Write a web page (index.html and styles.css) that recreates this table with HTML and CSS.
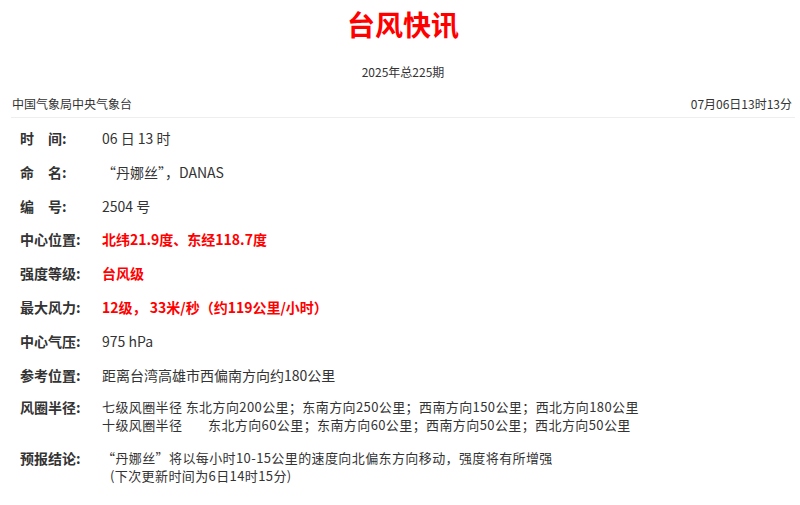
FILE: index.html
```html
<!DOCTYPE html>
<html lang="zh-CN">
<head>
<meta charset="utf-8">
<title>台风快讯</title>
<link rel="stylesheet" href="styles.css">
</head>
<body>
<div class="page">
  <h1 class="title">台风快讯</h1>
  <div class="issue">2025年总225期</div>
  <div class="meta">
    <span>中国气象局中央气象台</span>
    <span>07月06日13时13分</span>
  </div>
  <div class="list">
    <div class="row"><div class="label">时　间:</div><div class="value">06 日 13 时</div></div>
    <div class="row"><div class="label">命　名:</div><div class="value">“丹娜丝”，DANAS</div></div>
    <div class="row"><div class="label">编　号:</div><div class="value">2504 号</div></div>
    <div class="row"><div class="label">中心位置:</div><div class="value red">北纬21.9度、东经118.7度</div></div>
    <div class="row"><div class="label">强度等级:</div><div class="value red">台风级</div></div>
    <div class="row"><div class="label">最大风力:</div><div class="value red">12级，&nbsp;33米/秒（约119公里/小时）</div></div>
    <div class="row"><div class="label">中心气压:</div><div class="value">975 hPa</div></div>
    <div class="row"><div class="label">参考位置:</div><div class="value">距离台湾高雄市西偏南方向约180公里</div></div>
    <div class="row multi"><div class="label">风圈半径:</div>
      <div class="value small">
        <div>七级风圈半径 东北方向200公里；东南方向250公里；西南方向150公里；西北方向180公里</div>
        <div><span class="lvl">十级风圈半径</span>东北方向60公里；东南方向60公里；西南方向50公里；西北方向50公里</div>
      </div>
    </div>
    <div class="row multi forecast"><div class="label">预报结论:</div>
      <div class="value small">
        <div>“丹娜丝”将以每小时10-15公里的速度向北偏东方向移动，强度将有所增强</div>
        <div class="note">(下次更新时间为6日14时15分)</div>
      </div>
    </div>
  </div>
</div>
</body>
</html>
```
FILE: styles.css
```css
* { box-sizing: border-box; }
html, body { margin: 0; padding: 0; background: #fff; }
body {
  font-family: "Noto Sans CJK SC", "Noto Sans", sans-serif;
  color: #333;
}
.page { padding: 7px 5px 0 11px; }
.title {
  margin: 0;
  text-align: center;
  font-size: 28px;
  line-height: 34px;
  font-weight: 700;
  color: #ff0000;
}
.issue {
  margin-top: 23px;
  text-align: center;
  font-size: 12px;
  line-height: 16px;
  color: #333;
}
.meta {
  margin-top: 16px;
  display: flex;
  justify-content: space-between;
  font-size: 12px;
  line-height: 16px;
  padding: 0 3px 5px 1px;
  border-bottom: 1px solid #eee;
  color: #333;
}
.list {
  padding: 10px 0 0 9px;
  display: flex;
  flex-direction: column;
  gap: 13.8px;
}
.row {
  display: flex;
  align-items: flex-start;
  font-size: 14px;
  line-height: 20px;
}
.label {
  width: 82px;
  flex: none;
  font-weight: 700;
  color: #333;
}
.value { color: #333; }
.red { color: #ff0000; font-weight: 700; }
.multi .label { line-height: 18px; }
.small { font-size: 13px; line-height: 18px; letter-spacing: 0.4px; }
.lvl { display: inline-block; width: 106px; }
.forecast { margin-top: 1px; }
.note { padding-left: 8px; }
```
